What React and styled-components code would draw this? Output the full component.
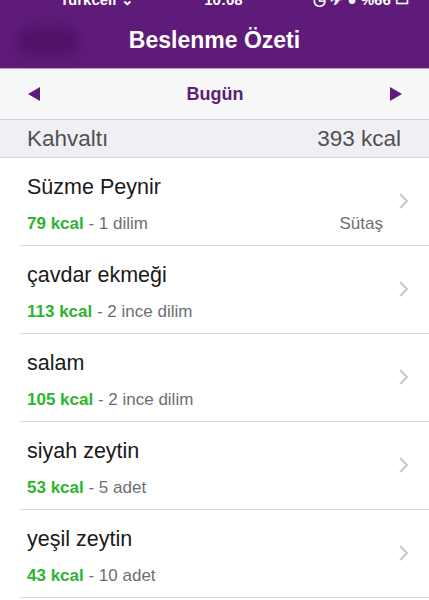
import React from "react";
import styled, { createGlobalStyle } from "styled-components";

const Global = createGlobalStyle`
  html, body { margin: 0; padding: 0; background: #ffffff; }
  body { font-family: "Liberation Sans", Arial, sans-serif; -webkit-font-smoothing: antialiased; }
`;

const Page = styled.div`
  width: 429px;
  height: 600px;
  overflow: hidden;
  display: flex;
  flex-direction: column;
  background: #ffffff;
`;

const Header = styled.header`
  background: #5f1b79;
  height: 68px;
  display: flex;
  flex-direction: column;
  border-bottom: 1px solid #b9a3c6;
`;

const StatusBar = styled.div`
  height: 7px;
  overflow: hidden;
  display: flex;
  align-items: flex-end;
  justify-content: space-between;
  padding: 0 20px 0 60px;
  color: #ffffff;
  font-size: 15px;
  font-weight: bold;
  line-height: 14px;
`;

const StatusText = styled.span`
  white-space: nowrap;
`;

const NavBar = styled.div`
  flex: 1;
  display: grid;
  grid-template-columns: 100px 1fr 100px;
  align-items: center;
`;

const BackBlur = styled.div`
  width: 60px;
  height: 26px;
  margin-left: 18px;
  margin-top: 6px;
  border-radius: 12px;
  background: #4e1266;
  filter: blur(7px);
`;

const Title = styled.h1`
  margin: 5px 0 0;
  text-align: center;
  color: #ffffff;
  font-size: 23px;
  font-weight: bold;
  white-space: nowrap;
`;

const DateBar = styled.div`
  height: 50px;
  background: #f7f7f8;
  display: flex;
  align-items: center;
  justify-content: space-between;
  padding: 0 27px 0 28px;
  border-bottom: 1px solid #d6d6da;
`;

const Arrow = styled.svg`
  width: 12px;
  height: 14px;
  fill: #5f1b79;
`;

const DateLabel = styled.span`
  color: #5f1b79;
  font-size: 18px;
  font-weight: bold;
`;

const SectionHeader = styled.div`
  height: 37px;
  background: #efeff4;
  display: flex;
  align-items: center;
  justify-content: space-between;
  padding: 0 28px 0 27px;
  color: #505053;
  font-size: 22.5px;
  border-bottom: 1px solid #d8d8dc;
`;

const List = styled.ul`
  list-style: none;
  margin: 0;
  padding: 0 0 0 20px;
`;

const Row = styled.li`
  height: 87px;
  border-bottom: 1px solid #d9d9dd;
  display: flex;
  align-items: center;
  padding: 0 21px 0 7px;
`;

const RowMain = styled.div`
  flex: 1;
  display: flex;
  flex-direction: column;
  gap: 14px;
  margin-top: 5px;
`;

const FoodName = styled.div`
  font-size: 21.5px;
  color: #1a1a1a;
`;

const SubLine = styled.div`
  display: flex;
  justify-content: space-between;
  font-size: 17px;
  color: #6e6e72;
  padding-right: 16px;
`;

const Kcal = styled.span`
  color: #2cb52c;
  font-weight: bold;
`;

const Chevron = styled.svg`
  width: 9px;
  height: 16px;
  margin-top: -2px;
`;

const foods = [
  { name: "Süzme Peynir", kcal: 79, amount: "1 dilim", brand: "Sütaş" },
  { name: "çavdar ekmeği", kcal: 113, amount: "2 ince dilim" },
  { name: "salam", kcal: 105, amount: "2 ince dilim" },
  { name: "siyah zeytin", kcal: 53, amount: "5 adet" },
  { name: "yeşil zeytin", kcal: 43, amount: "10 adet" },
];

export default function App() {
  return (
    <Page>
      <Global />
      <Header>
        <StatusBar>
          <StatusText>Turkcell ⌄</StatusText>
          <StatusText>10:08</StatusText>
          <StatusText>◷ ✈ ● %66 ▭</StatusText>
        </StatusBar>
        <NavBar>
          <BackBlur />
          <Title>Beslenme Özeti</Title>
          <div />
        </NavBar>
      </Header>
      <DateBar>
        <Arrow viewBox="0 0 12 14"><polygon points="12,0 12,14 0,7" /></Arrow>
        <DateLabel>Bugün</DateLabel>
        <Arrow viewBox="0 0 12 14"><polygon points="0,0 12,7 0,14" /></Arrow>
      </DateBar>
      <SectionHeader>
        <span>Kahvaltı</span>
        <span>393 kcal</span>
      </SectionHeader>
      <List>
        {foods.map((f) => (
          <Row key={f.name}>
            <RowMain>
              <FoodName>{f.name}</FoodName>
              <SubLine>
                <span>
                  <Kcal>{f.kcal} kcal</Kcal> - {f.amount}
                </span>
                {f.brand && <span>{f.brand}</span>}
              </SubLine>
            </RowMain>
            <Chevron viewBox="0 0 9 16">
              <polyline points="1,1 8,8 1,15" fill="none" stroke="#c7c7cc" strokeWidth="2" />
            </Chevron>
          </Row>
        ))}
      </List>
    </Page>
  );
}
